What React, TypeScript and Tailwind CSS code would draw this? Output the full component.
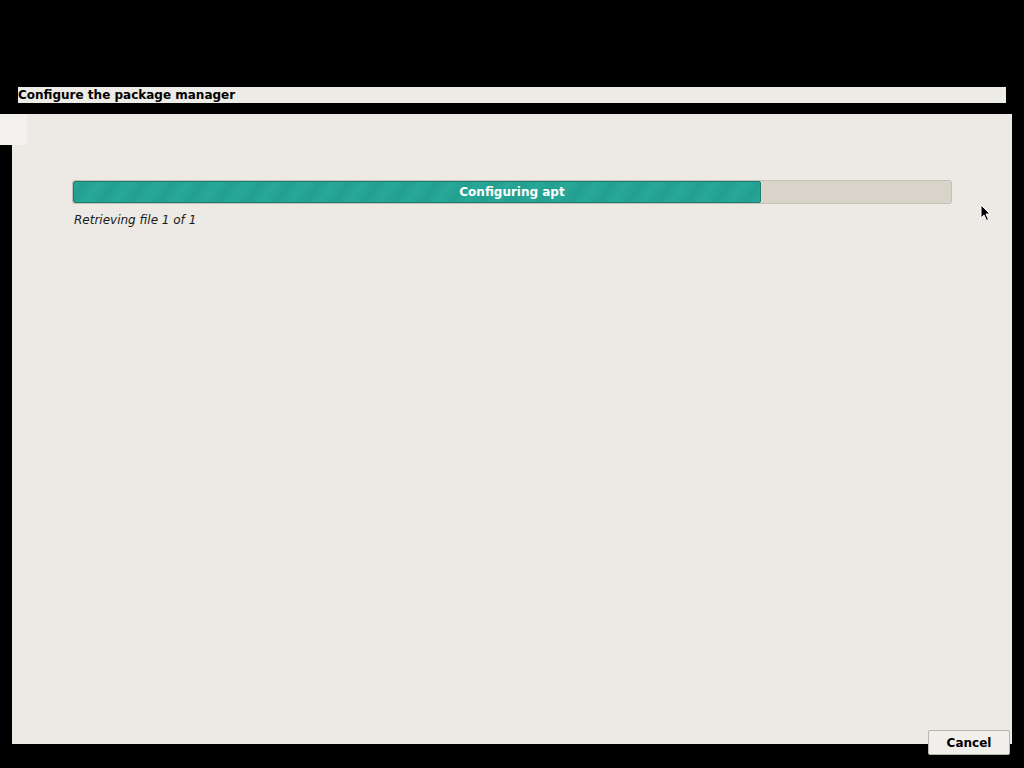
import React from 'react';

const font = { fontFamily: '"DejaVu Sans", "Liberation Sans", sans-serif' };

const Cursor = () => (
  <svg width="12" height="18" viewBox="0 0 12 18" className="absolute left-[980px] top-[204px]">
    <path d="M1 1 L1 14 L4 11 L6.5 16.5 L8.5 15.5 L6 10 L10 10 Z" fill="#000" stroke="#fff" strokeWidth="1" />
  </svg>
);

export default function App() {
  const progress = 78.4;

  return (
    <div className="relative w-[1024px] h-[768px] bg-black overflow-hidden" style={font}>
      <div className="pt-[87px] pl-[18px]">
        <div className="w-[988px] h-[16px] bg-[#eeece7] flex items-center">
          <span className="text-[12px] leading-none font-bold text-black">Configure the package manager</span>
        </div>
      </div>

      <div className="mt-[11px] ml-[12px] w-[1000px] h-[630px] bg-[#edeae5]">
        <div className="pt-[66px] pl-[60px]">
          {/* progress bar */}
          <div className="relative w-[880px] h-[24px] rounded-[3px] border border-[#c4c0b6] bg-[#d8d4ca] overflow-hidden">
            <div
              className="h-full rounded-[2px] border border-[#1d7d73] bg-[#27a898]"
              style={{
                width: `${progress}%`,
                backgroundImage:
                  'repeating-linear-gradient(-55deg, rgba(0,70,60,0) 0px, rgba(0,70,60,0.04) 6px, rgba(0,70,60,0.10) 12px, rgba(0,70,60,0.04) 18px, rgba(0,70,60,0) 24px)',
              }}
            />
            <div className="absolute inset-0 flex items-center justify-center">
              <span className="text-[12px] font-bold text-white">Configuring apt</span>
            </div>
          </div>
          <p className="mt-[7px] ml-[2px] text-[12px] italic text-[#1a1a1a]">Retrieving file 1 of 1</p>
        </div>
      </div>

      <div className="absolute left-0 top-[114px] w-[27px] h-[31px] bg-[#f3f1ee]" />

      <button className="absolute left-[928px] top-[730px] w-[82px] h-[25px] rounded-[2px] border border-[#b9b5ad] bg-[#f1efeb] text-[12px] font-bold text-black flex items-center justify-center">
        Cancel
      </button>

      <Cursor />
    </div>
  );
}
